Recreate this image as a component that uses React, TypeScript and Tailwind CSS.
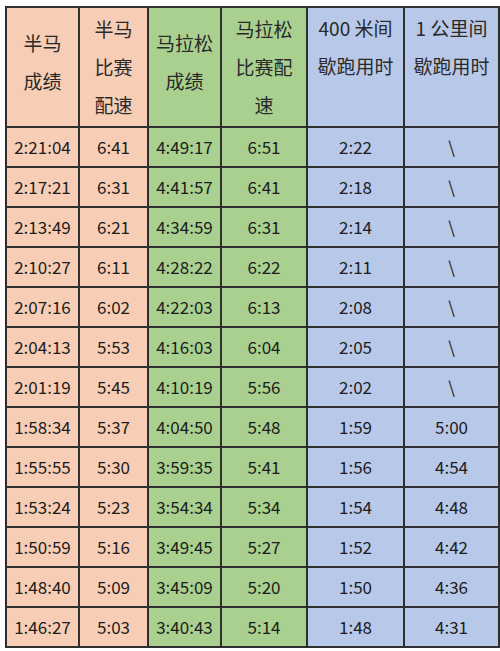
import React from 'react';

const rows: string[][] = [
  ['2:21:04', '6:41', '4:49:17', '6:51', '2:22', '\\'],
  ['2:17:21', '6:31', '4:41:57', '6:41', '2:18', '\\'],
  ['2:13:49', '6:21', '4:34:59', '6:31', '2:14', '\\'],
  ['2:10:27', '6:11', '4:28:22', '6:22', '2:11', '\\'],
  ['2:07:16', '6:02', '4:22:03', '6:13', '2:08', '\\'],
  ['2:04:13', '5:53', '4:16:03', '6:04', '2:05', '\\'],
  ['2:01:19', '5:45', '4:10:19', '5:56', '2:02', '\\'],
  ['1:58:34', '5:37', '4:04:50', '5:48', '1:59', '5:00'],
  ['1:55:55', '5:30', '3:59:35', '5:41', '1:56', '4:54'],
  ['1:53:24', '5:23', '3:54:34', '5:34', '1:54', '4:48'],
  ['1:50:59', '5:16', '3:49:45', '5:27', '1:52', '4:42'],
  ['1:48:40', '5:09', '3:45:09', '5:20', '1:50', '4:36'],
  ['1:46:27', '5:03', '3:40:43', '5:14', '1:48', '4:31'],
];

// background per column: orange, orange, green, green, blue, blue
const colBg = [
  'bg-[#f7cdb5]',
  'bg-[#f7cdb5]',
  'bg-[#a9d08f]',
  'bg-[#a9d08f]',
  'bg-[#b8c8e8]',
  'bg-[#b8c8e8]',
];

const headers: { lines: string[]; align: string }[] = [
  { lines: ['半马', '成绩'], align: 'justify-center pb-[10px]' },
  { lines: ['半马', '比赛', '配速'], align: 'justify-center' },
  { lines: ['马拉松', '成绩'], align: 'justify-center pb-[10px]' },
  { lines: ['马拉松', '比赛配', '速'], align: 'justify-center' },
  { lines: ['400 米间', '歇跑用时'], align: 'justify-start pt-[1px]' },
  { lines: ['1 公里间', '歇跑用时'], align: 'justify-start pt-[1px]' },
];

export default function App() {
  return (
    <div
      className="w-[500px] h-[651px] bg-white pt-[6px] pl-[5px] overflow-hidden text-[#1c1c1c]"
      style={{ fontFamily: '"Noto Sans CJK SC", "Noto Sans", sans-serif' }}
    >
      <div className="grid grid-cols-[73px_69px_73px_86px_97px_1fr] border-l-2 border-t-2 border-[#2f2f2f]">
        {/* header */}
        {headers.map((h, i) => (
          <div
            key={i}
            className={`h-[120px] flex flex-col items-center border-r-2 border-b-2 border-[#2f2f2f] text-[19px] leading-[38px] text-[#2a2a2a] ${colBg[i]} ${h.align}`}
          >
            {h.lines.map((l) => (
              <span key={l}>{l}</span>
            ))}
          </div>
        ))}

        {/* body */}
        {rows.map((r, ri) =>
          r.map((v, ci) => (
            <div
              key={`${ri}-${ci}`}
              className={`h-[40px] flex items-center justify-center border-r-2 border-b-2 border-[#2f2f2f] text-[17px] ${colBg[ci]}`}
            >
              {v}
            </div>
          ))
        )}
      </div>
    </div>
  );
}
